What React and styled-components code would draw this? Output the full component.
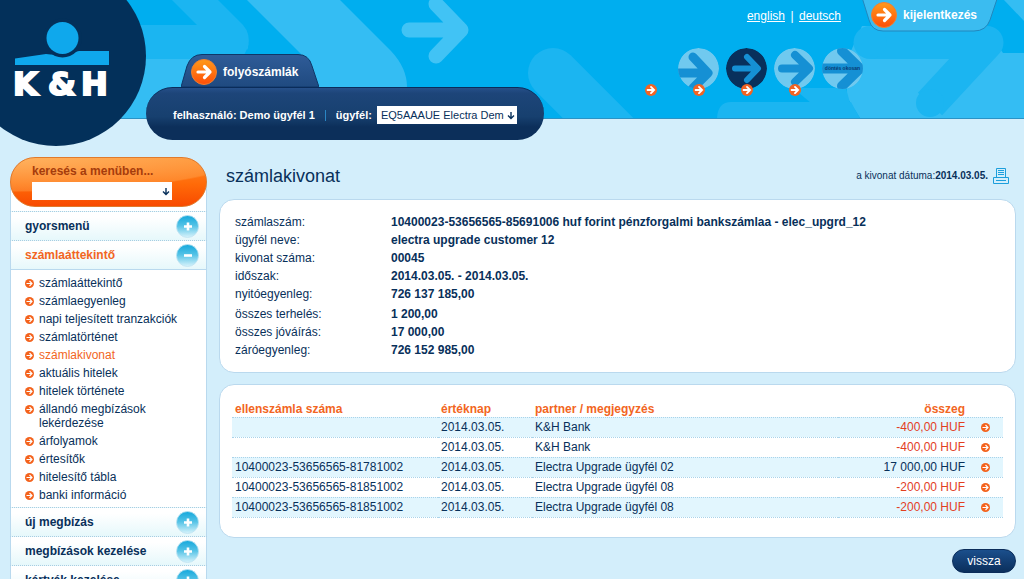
import React from 'react';
import styled, { createGlobalStyle } from 'styled-components';

const navy = '#08305a';
const orange = '#f26522';

const Global = createGlobalStyle`
  *, *::before, *::after { box-sizing: border-box; }
  body {
    margin: 0;
    background: #d3eefb;
    color: ${navy};
    font: 12px/14px "Liberation Sans", Arial, sans-serif;
  }
  a { color: inherit; }
  button, select { font: inherit; }
`;

const Page = styled.div`
  height: 100vh;
  overflow: hidden;
`;

const Header = styled.header`
  position: relative;
  display: flex;
  align-items: flex-start;
  height: 119px;
  background: #00aeef;
  border-bottom: 1px solid #2a93c6;
`;

const Backdrop = styled.svg`
  position: absolute;
  inset: 0;
  width: 100%;
  height: 100%;
`;

const Brand = styled.a`
  position: relative;
  flex: none;
  display: block;
  width: 146px;
  height: 146px;
  svg { display: block; }
`;

const Account = styled.div`
  position: relative;
  flex: none;
  padding-top: 54px;
`;

const AccountTab = styled.button`
  position: relative;
  display: flex;
  align-items: center;
  width: 138px;
  height: 33px;
  margin-left: 35px;
  padding: 3px 0 0 10px;
  gap: 6px;
  border: 0;
  background: none;
  color: #fff;
  font-weight: bold;
  svg, span { position: relative; }
`;

const TabShape = styled.svg`
  && { position: absolute; }
  inset: 0;
  width: 100%;
  height: 100%;
`;

const AccountBar = styled.div`
  display: flex;
  align-items: center;
  height: 53px;
  padding: 2px 27px 0;
  border-radius: 27px;
  border-top: 1px solid #0a2c5a;
  background: linear-gradient(#26508a 0, #1d4579 10%, #17406f 55%, #0c2f5a 75%, #0c2f5a);
  color: #fff;
  font-weight: bold;
  font-size: 11px;
`;

const Divider = styled.span`
  width: 1px;
  height: 11px;
  margin: 0 10px;
  background: #2a86c4;
`;

const SelectBox = styled.span`
  position: relative;
  display: block;
  width: 140px;
  margin-left: ${p => (p.$inline ? '5px' : 0)};
  select {
    display: block;
    width: 100%;
    height: 18px;
    padding: 0 13px 0 4px;
    border: 0;
    border-radius: 0;
    appearance: none;
    background: #fff;
    color: ${navy};
    font-weight: normal;
  }
  svg {
    position: absolute;
    right: 2px;
    top: 5px;
    pointer-events: none;
  }
`;

const HeaderEnd = styled.div`
  position: relative;
  margin-left: auto;
  display: flex;
  flex-direction: column;
  align-items: flex-end;
  gap: 16px;
`;

const TopLinks = styled.nav`
  display: flex;
  align-items: center;
  height: 32px;
  padding-right: 26px;
  color: #fff;
`;

const Sep = styled.span`
  width: 14px;
  text-align: center;
`;

const Logout = styled.button`
  position: relative;
  display: flex;
  align-items: center;
  gap: 6px;
  width: 136px;
  height: 32px;
  margin-left: 21px;
  padding: 0 0 3px 9px;
  border: 0;
  background: none;
  color: #fff;
  font-weight: bold;
  svg, span { position: relative; }
`;

const Themes = styled.div`
  display: flex;
  gap: 7px;
  padding-right: 161px;
`;

const Theme = styled.button`
  display: flex;
  flex-direction: column;
  align-items: center;
  width: 41px;
  height: 50px;
  padding: 0;
  border: 0;
  background: none;
`;

const ThemeArt = styled.svg`
  flex: none;
  display: block;
  margin-bottom: -5px;
`;

const Body = styled.div`
  display: flex;
  align-items: flex-start;
  gap: 12px;
  padding: 38px 8px 0 10px;
`;

const Sidebar = styled.aside`
  flex: none;
  width: 197px;
  border-radius: 25px 25px 0 0;
  background: #fff;
  box-shadow: inset 1px 0 #b9d9ee, inset -1px 0 #b9d9ee;
`;

const Search = styled.form`
  display: flex;
  flex-direction: column;
  gap: 4px;
  height: 50px;
  margin-bottom: 4px;
  padding: 6px 21px;
  border: 1px solid #e07a2c;
  border-radius: 25px;
  background: radial-gradient(ellipse 230px 34px at 0 0, rgba(255, 205, 130, .6), rgba(255, 190, 110, .3) 97%, transparent),
    linear-gradient(#ff8a2a, #ff6a08 55%, #f84a00);
  color: #a63c0c;
  font-weight: bold;
`;

const MenuHead = styled.button`
  display: flex;
  align-items: center;
  justify-content: space-between;
  width: 100%;
  height: 29px;
  padding: 0 7px 0 14px;
  border: 1px solid #b9d9ee;
  border-top: 1px dotted #a9cde2;
  border-bottom: 0;
  background: linear-gradient(#fff 20%, #e6f8fb);
  color: ${p => (p.$open ? orange : navy)};
  font-weight: bold;
`;

const SubMenu = styled.ul`
  margin: 0 1px;
  padding: 4px 10px 3px 14px;
  border-top: 1px solid #b9d9ee;
  list-style: none;
`;

const SubItem = styled.li`
  display: flex;
  align-items: flex-start;
  gap: 5px;
  padding: 2px 0;
  color: ${p => (p.$current ? orange : navy)};
  svg { flex: none; margin-top: 3px; }
  a { width: 110px; white-space: ${p => (p.$wrap ? 'normal' : 'nowrap')}; text-decoration: none; }
`;

const Main = styled.main`
  flex: 1;
  min-width: 0;
  display: flex;
  flex-direction: column;
`;

const TitleRow = styled.div`
  display: flex;
  align-items: center;
  justify-content: space-between;
  height: 42px;
  padding: 0 7px 4px;
  h1 { margin: 0; font-size: 18px; line-height: 22px; font-weight: normal; }
`;

const Statement = styled.div`
  display: flex;
  align-items: center;
  gap: 5px;
  font-size: 10px;
`;

const PrintButton = styled.button`
  display: block;
  padding: 0;
  border: 0;
  background: none;
  svg { display: block; }
`;

const Panel = styled.section`
  margin-bottom: 11px;
  padding: ${p => (p.$table ? '17px 12px 19px' : '13px 15px')};
  border: 1px solid #bad9ee;
  border-radius: 15px;
  background: #fff;
`;

const Details = styled.dl`
  margin: 0;
  div { display: flex; line-height: 18px; }
  div:nth-child(6) { margin-top: 2px; }
  dt { width: 156px; }
  dd { margin: 0; font-weight: bold; }
`;

const Table = styled.table`
  width: 100%;
  table-layout: fixed;
  border-collapse: collapse;
  text-align: left;
  th {
    height: 15px;
    padding: 0 3px;
    color: ${orange};
  }
  td {
    height: 20px;
    padding: 0 3px;
    border-top: 1px dotted #a9d3ea;
  }
  tbody { border-bottom: 1px dotted #a9d3ea; }
  tbody tr:nth-child(odd) { background: #e2f6fe; }
`;

const Col = styled.col`
  width: ${p => p.$w};
`;

const Amount = styled.td`
  text-align: right;
  color: ${p => (p.$debit ? '#e2401f' : navy)};
`;

const AmountHead = styled.th`
  && { text-align: right; }
`;

const RowLink = styled.a`
  display: block;
  width: 9px;
  margin-left: 10px;
  svg { display: block; }
`;

const Back = styled.button`
  align-self: flex-end;
  width: 64px;
  height: 24px;
  padding: 0;
  border: 1px solid #0a2c5a;
  border-radius: 12px;
  background: linear-gradient(#1b4f8c, #0b2f5c);
  color: #fff;
`;

function OrangeArrow({ size = 26 }) {
  return (
    <svg width={size} height={size} viewBox="0 0 26 26" aria-hidden="true">
      <defs>
        <linearGradient id="orb" x1="0" y1="0" x2="0" y2="1">
          <stop offset="0" stopColor="#ff9a1a" />
          <stop offset="1" stopColor="#ff4e08" />
        </linearGradient>
      </defs>
      <circle cx="13" cy="13" r="12.5" fill="url(#orb)" stroke="#f0802f" />
      <path d="M7 13H19M13.500 7.500L19 13l-5.500 5.500" fill="none" stroke="#fff" strokeWidth="3.2" strokeLinecap="round" strokeLinejoin="round" />
    </svg>
  );
}

function MiniArrow() {
  return (
    <svg width="12" height="12" viewBox="0 0 12 12" aria-hidden="true">
      <circle cx="6" cy="6" r="6" fill="#f26322" />
      <path d="M2.600 6h6.400M6 2.900L9.100 6 6 9.100" fill="none" stroke="#fff" strokeWidth="1.9" strokeLinecap="round" />
    </svg>
  );
}

function Bullet() {
  return (
    <svg width="9" height="9" viewBox="0 0 9 9" aria-hidden="true">
      <circle cx="4.5" cy="4.5" r="4.5" fill="#f4621c" />
      <path d="M1.500 4.500h5.500M4.500 2l2.500 2.500L4.500 7" fill="none" stroke="#fff" strokeWidth="1.1" />
    </svg>
  );
}

function DownArrow() {
  return (
    <svg width="8" height="9" viewBox="0 0 8 9" aria-hidden="true">
      <path d="M4 1v6.500M1 4.500L4 7.500l3-3" fill="none" stroke={navy} strokeWidth="1.4" />
    </svg>
  );
}

function Toggle({ open }) {
  return (
    <svg width="23" height="23" viewBox="0 0 23 23" aria-hidden="true">
      <defs>
        <linearGradient id="ball" x1="0" y1="0" x2="0" y2="1">
          <stop offset="0" stopColor="#14a8dc" />
          <stop offset=".45" stopColor="#52c2e6" />
          <stop offset="1" stopColor="#d8f3fb" />
        </linearGradient>
      </defs>
      <circle cx="11.5" cy="11.5" r="11" fill="url(#ball)" stroke="#bfe3f1" strokeWidth=".8" />
      <path d={open ? 'M8 11.500h8' : 'M8 11.500h8M12 7.500v8'} stroke="#fff" strokeWidth="2.6" />
    </svg>
  );
}

function HeaderArt() {
  return (
    <Backdrop viewBox="0 0 1024 118" preserveAspectRatio="xMidYMin slice" aria-hidden="true">
      <path d="M120 59H249L240 0H340L391 51Q407 68 407 87V118H120Z" fill="#34bdf3" />
      <path d="M218 0h29l54 54v6h-60Q256 45 240 24Z" fill="#00aeef" />
      <path d="M120 25h77L172 0h46l25 25q8 9 5 22l-6 12H120Z" fill="#1bb5f1" />
      <path d="M409 30h50M436 4l25 26-25 26" fill="none" stroke="#41c3f5" strokeWidth="15" strokeLinecap="round" strokeLinejoin="round" />
      <path d="M553 73l80 80" stroke="#1bb5f1" strokeWidth="50" strokeLinecap="round" />
      <path d="M847 60L862 26H985L1003 53h21V118H860q-5-8-13-21Z" fill="#34bdf3" />
      <path d="M1004 0h20v21Z" fill="#34bdf3" />
      <path d="M793 88l18 15h39l-4-15Z" fill="#1bb5f1" />
      <path d="M717 118q1-16 14-16h120q4 8 9 16Z" fill="#1bb5f1" />
      <path d="M870 42.500H987L930 104" fill="none" stroke="#1bb5f1" strokeWidth="33" strokeLinejoin="round" />
      <circle cx="870" cy="42.500" r="16.500" fill="#1bb5f1" />
      <circle cx="930" cy="103" r="14" fill="#1bb5f1" />
    </Backdrop>
  );
}

function Logo() {
  return (
    <svg width="146" height="146" viewBox="0 0 146 146" role="img" aria-label="K&amp;H">
      <circle cx="56" cy="56" r="90" fill="#03305a" />
      <path d="M15 58.500l31-4.500q16 2 33-3h30v14H15Z" fill="#0fa8ec" />
      <circle cx="62.500" cy="38" r="19.500" fill="#03305a" />
      <circle cx="62.500" cy="38" r="16" fill="#0fa8ec" />
      <text x="13 48 81" y="95" fill="#fff" stroke="#fff" strokeWidth="2" fontFamily="DejaVu Sans, sans-serif" fontWeight="bold" fontSize="32">K&amp;H</text>
    </svg>
  );
}

const themes = [
  { name: 'alap' },
  { name: 'világos', disc: '#70c9ef', ink: '#1590d4', d: 'M-3 25H30M15 9l15 16-15 15', w: 9, mini: true },
  { name: 'sötét', disc: '#08305c', ink: '#1590d4', d: 'M9 20.500H31M21 9l11 11.500-11 11.500', w: 6, mini: true },
  { name: 'kék', disc: '#70c9ef', ink: '#1590d4', d: 'M8 20.500H34M21 7l14 13.500-14 13.500', w: 8, mini: true },
  { name: 'okos', disc: '#70c9ef', ink: '#1590d4', d: 'M-3 20.500H37M20 3l18 17.500-18 17.500', w: 10, label: 'döntés okosan' },
];

function ThemeButton({ theme, index }) {
  return (
    <Theme type="button" aria-label={theme.name}>
      <ThemeArt width="41" height="41" viewBox="0 0 41 41" aria-hidden="true">
        {theme.disc && (
          <>
            <clipPath id={`disc${index}`}><circle cx="20.500" cy="20.500" r="20.500" /></clipPath>
            <g clipPath={`url(#disc${index})`}>
              <circle cx="20.500" cy="20.500" r="20.500" fill={theme.disc} />
              <path d={theme.d} fill="none" stroke={theme.ink} strokeWidth={theme.w} strokeLinecap="round" strokeLinejoin="round" />
            </g>
          </>
        )}
        {theme.label && (
          <text x="20.500" y="22" textAnchor="middle" fontSize="5" fontWeight="bold" fill="#083a70" fontFamily="Liberation Sans, sans-serif">{theme.label}</text>
        )}
      </ThemeArt>
      {(theme.mini || !theme.disc) && <MiniArrow />}
    </Theme>
  );
}

const subItems = [
  'számlaáttekintő', 'számlaegyenleg', 'napi teljesített tranzakciók', 'számlatörténet', 'számlakivonat',
  'aktuális hitelek', 'hitelek története', 'állandó megbízások lekérdezése', 'árfolyamok', 'értesítők',
  'hitelesítő tábla', 'banki információ',
];

const details = [
  ['számlaszám:', '10400023-53656565-85691006 huf forint pénzforgalmi bankszámlaa - elec_upgrd_12'],
  ['ügyfél neve:', 'electra upgrade customer 12'],
  ['kivonat száma:', '00045'],
  ['időszak:', '2014.03.05. - 2014.03.05.'],
  ['nyitóegyenleg:', '726 137 185,00'],
  ['összes terhelés:', '1 200,00'],
  ['összes jóváírás:', '17 000,00'],
  ['záróegyenleg:', '726 152 985,00'],
];

const rows = [
  ['', '2014.03.05.', 'K&H Bank', '-400,00 HUF'],
  ['', '2014.03.05.', 'K&H Bank', '-400,00 HUF'],
  ['10400023-53656565-81781002', '2014.03.05.', 'Electra Upgrade ügyfél 02', '17 000,00 HUF'],
  ['10400023-53656565-81851002', '2014.03.05.', 'Electra Upgrade ügyfél 08', '-200,00 HUF'],
  ['10400023-53656565-81851002', '2014.03.05.', 'Electra Upgrade ügyfél 08', '-200,00 HUF'],
];

function MenuSection({ title, open }) {
  return (
    <MenuHead type="button" $open={open} aria-expanded={!!open}>
      {title}
      <Toggle open={open} />
    </MenuHead>
  );
}

export default function App() {
  return (
    <Page>
      <Global />
      <Header>
        <HeaderArt />
        <Brand href="#"><Logo /></Brand>
        <Account>
          <AccountTab type="button">
            <TabShape viewBox="0 0 138 33" preserveAspectRatio="none" aria-hidden="true">
              <defs>
                <linearGradient id="tab" x1="0" y1="0" x2="0" y2="1">
                  <stop offset="0" stopColor="#2f5c98" />
                  <stop offset="1" stopColor="#1f4a80" />
                </linearGradient>
              </defs>
              <path d="M0 33L6 12Q10 .5 21 .5H117Q128 .5 131 12L138 33Z" fill="url(#tab)" stroke="#0f3768" />
            </TabShape>
            <OrangeArrow />
            <span>folyószámlák</span>
          </AccountTab>
          <AccountBar>
            <span>felhasználó: Demo ügyfél 1</span>
            <Divider />
            <label htmlFor="client">ügyfél:</label>
            <SelectBox $inline>
              <select id="client"><option>EQ5AAAUE Electra Demo</option></select>
              <DownArrow />
            </SelectBox>
          </AccountBar>
        </Account>
        <HeaderEnd>
          <TopLinks>
            <a href="#en">english</a>
            <Sep>|</Sep>
            <a href="#de">deutsch</a>
            <Logout type="button">
              <TabShape viewBox="0 0 136 32" preserveAspectRatio="none" aria-hidden="true">
                <path d="M.5-1L7 20Q10 31 21 31H112Q124 31 128 20L135-1Z" fill="#3bbcf0" stroke="#2287bd" />
              </TabShape>
              <OrangeArrow />
              <span>kijelentkezés</span>
            </Logout>
          </TopLinks>
          <Themes>
            {themes.map((t, i) => <ThemeButton key={t.name} theme={t} index={i} />)}
          </Themes>
        </HeaderEnd>
      </Header>
      <Body>
        <Sidebar>
          <Search>
            <label htmlFor="menu-search">keresés a menüben...</label>
            <SelectBox>
              <select id="menu-search"><option></option></select>
              <DownArrow />
            </SelectBox>
          </Search>
          <MenuSection title="gyorsmenü" />
          <MenuSection title="számlaáttekintő" open />
          <SubMenu>
            {subItems.map(s => (
              <SubItem key={s} $current={s === 'számlakivonat'} $wrap={s.startsWith('állandó')}>
                <Bullet />
                <a href="#menu">{s}</a>
              </SubItem>
            ))}
          </SubMenu>
          <MenuSection title="új megbízás" />
          <MenuSection title="megbízások kezelése" />
          <MenuSection title="kártyák kezelése" />
        </Sidebar>
        <Main>
          <TitleRow>
            <h1>számlakivonat</h1>
            <Statement>
              <span>a kivonat dátuma:<b>2014.03.05.</b></span>
              <PrintButton type="button" aria-label="nyomtatás">
                <svg width="16" height="17" viewBox="0 0 16 17" fill="none" stroke="#1c9fdc" aria-hidden="true">
                  <path d="M3.500 9.500V.5H12.500V9.500M.5 9.500H15.500V15.500H.5ZM5 2.500h6M5 4.500h6M5 6.500h6M3 12.500h10" />
                </svg>
              </PrintButton>
            </Statement>
          </TitleRow>
          <Panel>
            <Details>
              {details.map(([k, v]) => <div key={k}><dt>{k}</dt><dd>{v}</dd></div>)}
            </Details>
          </Panel>
          <Panel $table>
            <Table>
              <colgroup>
                <Col $w="206px" /><Col $w="94px" /><Col $w="auto" /><Col $w="130px" /><Col $w="35px" />
              </colgroup>
              <thead>
                <tr>
                  <th>ellenszámla száma</th>
                  <th>értéknap</th>
                  <th>partner / megjegyzés</th>
                  <AmountHead>összeg</AmountHead>
                  <th aria-label="részletek" />
                </tr>
              </thead>
              <tbody>
                {rows.map((r, i) => (
                  <tr key={i}>
                    <td>{r[0]}</td>
                    <td>{r[1]}</td>
                    <td>{r[2]}</td>
                    <Amount $debit={r[3].startsWith('-')}>{r[3]}</Amount>
                    <td><RowLink href="#row" aria-label="részletek"><Bullet /></RowLink></td>
                  </tr>
                ))}
              </tbody>
            </Table>
          </Panel>
          <Back type="button">vissza</Back>
        </Main>
      </Body>
    </Page>
  );
}
